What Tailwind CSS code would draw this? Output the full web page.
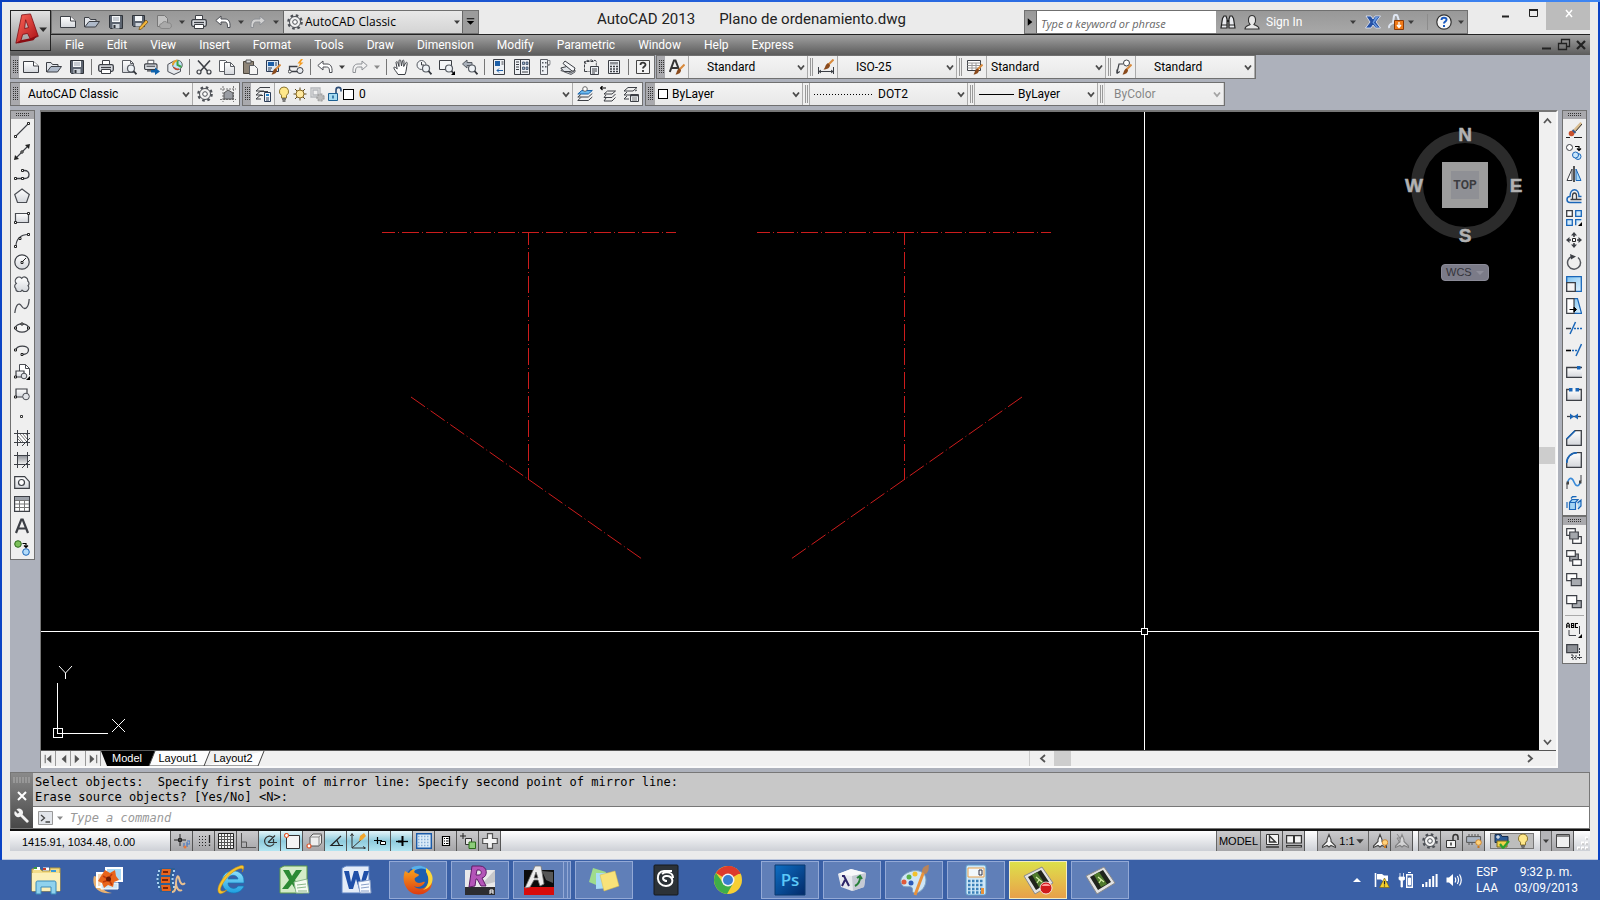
<!DOCTYPE html>
<html lang="en">
<head>
<meta charset="utf-8">
<title>AutoCAD 2013 - Plano de ordenamiento.dwg</title>
<script src="https://cdn.jsdelivr.net/npm/@tailwindcss/browser@4"></script>
</head>
<body class="h-screen flex flex-col overflow-hidden bg-[#0a42c4] font-['Open_Sans','Noto_Sans',sans-serif] text-[12px] text-black">

<!-- Icon sprite -->
<svg width="0" height="0" class="absolute" aria-hidden="true">
<defs>
<linearGradient id="gp" x1="0" y1="0" x2="0" y2="1"><stop offset="0" stop-color="#fff"/><stop offset="1" stop-color="#d4d7dc"/></linearGradient>
<linearGradient id="gd" x1="0" y1="0" x2="0" y2="1"><stop offset="0" stop-color="#8d9096"/><stop offset="1" stop-color="#f2f2f2"/></linearGradient>
<linearGradient id="gb" x1="0" y1="0" x2="1" y2="1"><stop offset="0" stop-color="#7fc4f0"/><stop offset="1" stop-color="#e4f5ff"/></linearGradient>
<linearGradient id="gr" x1="0" y1="0" x2="1" y2="1"><stop offset="0" stop-color="#ff6a5c"/><stop offset="1" stop-color="#a80e14"/></linearGradient>
<linearGradient id="gps" x1="0" y1="0" x2="1" y2="1"><stop offset="0" stop-color="#0e6fc4"/><stop offset="1" stop-color="#032a6a"/></linearGradient>
<linearGradient id="gie" x1="0" y1="0" x2="0" y2="1"><stop offset="0" stop-color="#8fe0fb"/><stop offset="1" stop-color="#1c9fe0"/></linearGradient>
<linearGradient id="gff" x1="0" y1="0" x2="0" y2="1"><stop offset="0" stop-color="#f9a21c"/><stop offset="1" stop-color="#dd3b12"/></linearGradient>
<g id="mag"><circle cx="10" cy="9.500" r="3.500" fill="#eef2f6" stroke="#555a62" stroke-width="1.200"/><path d="M12.500 12l3 3.300" stroke="#33363c" stroke-width="1.800"/></g>
<g id="brush"><path d="M15.500 5.500L10 11" stroke="#d88a3c" stroke-width="2"/><path d="M10.500 9.500l1.500 1.500c0 3-3 4.500-5.500 4.500 1.500-1.500 1-5 4-6z" fill="#8a4a1c"/></g>

<symbol id="new" viewBox="0 0 16 16"><path d="M.5 2.500h10l5 4.500v6.500H.5z" fill="url(#gp)" stroke="#3c3f45"/><path d="M10.500 2.500v4.500h5" fill="#fff" stroke="#3c3f45"/></symbol>
<symbol id="open" viewBox="0 0 16 16"><path d="M.5 13V3.500h4.500l1.500 2h5.500V8" fill="#e2e5ea" stroke="#3c3f45"/><path d="M.8 13L5 7.500h10.500L11.500 13z" fill="#aeb9c9" stroke="#3c3f45"/></symbol>
<symbol id="save" viewBox="0 0 16 16"><path d="M1.500 1.500h13v13h-12l-1-1z" fill="#5c6470" stroke="#2f3339"/><path d="M4 2h8v6H4z" fill="#f4f6f8"/><path d="M5 4h6M5 6h6" stroke="#9aa2ad"/><path d="M4.500 10h7v4.500h-7z" fill="#cdd3da"/><path d="M5.500 11h2v3h-2z" fill="#2f3339"/></symbol>
<symbol id="saveas" viewBox="0 0 16 16"><path d="M.5 1.500h12v11H1.500l-1-1z" fill="#5c6470" stroke="#2f3339"/><path d="M3 2h7v5H3z" fill="#f4f6f8"/><path d="M3.500 9h6v3.500h-6z" fill="#cdd3da"/><path d="M14 6l2 2-6.500 7-2.500 1 .6-2.800z" fill="#f2b53a" stroke="#6b4a16" stroke-width=".7"/></symbol>
<symbol id="cloud" viewBox="0 0 16 16"><path d="M1.500 1.500h7l3 3v8h-10z" fill="#c2c2c2" stroke="#777"/><path d="M6 14.500a2.500 2.500 0 010-5 3 3 0 015.500-.5 2.800 2.800 0 012 5.500z" fill="#a9a9a9" stroke="#808080" stroke-width=".8"/></symbol>
<symbol id="print" viewBox="0 0 16 16"><path d="M4.500 6V1.500h7V6" fill="#fff" stroke="#3c3f45"/><rect x=".7" y="5.700" width="14.600" height="6.600" rx="1.500" fill="#d9dce1" stroke="#3c3f45" stroke-width="1.300"/><path d="M3 8.500h10" stroke="#3c3f45" stroke-width="1.300"/><path d="M3.500 10.500h9v4h-9z" fill="#fff" stroke="#3c3f45"/></symbol>
<symbol id="preview" viewBox="0 0 16 16"><path d="M1.500 1.500h8l3 3v9h-11z" fill="url(#gp)" stroke="#5b5e64"/><path d="M9.500 1.500v3h3" fill="none" stroke="#5b5e64"/><use href="#mag"/></symbol>
<symbol id="publish" viewBox="0 0 16 16"><g transform="scale(.85)"><path d="M4.500 6V1.500h7V6" fill="#fff" stroke="#3c3f45"/><rect x=".7" y="5.700" width="14.600" height="6.600" rx="1.500" fill="#d9dce1" stroke="#3c3f45" stroke-width="1.300"/><path d="M3 8.500h10M3.500 14h6" stroke="#3c3f45" stroke-width="1.300"/></g><path d="M7 11h4V8.500l5 4-5 3.500v-2.500H7z" fill="#0f62ac"/></symbol>
<symbol id="print3d" viewBox="0 0 16 16"><path d="M.8 5.500L7 2l6.500 3.500v7L7 15.500.8 12.500z" fill="#e6e9ed" stroke="#4c5058"/><circle cx="10.500" cy="6" r="4.800" fill="#bfe3f4" stroke="#666"/><path d="M10.500 1.500V6l4 2" stroke="#3ca44a" stroke-width="2" fill="none"/><path d="M6 6a5 5 0 014-4.500" stroke="#e8a22c" stroke-width="2" fill="none"/><path d="M7 8.500a4.500 4.500 0 005 1.500" stroke="#c8452c" stroke-width="1.500" fill="none"/></symbol>
<symbol id="cut" viewBox="0 0 16 16"><path d="M2 1.500L11.500 12M14 1.500L4.500 12" stroke="#3c3f45" stroke-width="1.600"/><circle cx="3" cy="13" r="2" fill="none" stroke="#3c3f45" stroke-width="1.200"/><circle cx="13" cy="13" r="2" fill="none" stroke="#3c3f45" stroke-width="1.200"/></symbol>
<symbol id="copyclip" viewBox="0 0 16 16"><path d="M.5 1.500h6l3 3v8h-9z" fill="#fff" stroke="#5b5e64"/><path d="M5.500 3.500h6l4 4v8h-10z" fill="url(#gp)" stroke="#5b5e64"/><path d="M11.500 3.500v4h4" fill="none" stroke="#5b5e64"/></symbol>
<symbol id="paste" viewBox="0 0 16 16"><path d="M1.500 2.500h10v12h-10z" fill="#8e8477" stroke="#4c463d"/><path d="M4 1h5v3H4z" fill="#d8d8d8" stroke="#555"/><path d="M7.500 6.500h5l3 3v6h-8z" fill="#f4f4f4" stroke="#5b5e64"/></symbol>
<symbol id="match" viewBox="0 0 16 16"><path d="M1.500 1.500h12v11h-12z" fill="#dce8f5" stroke="#2b3b55"/><path d="M3 3h6v4H3z" fill="#1d5fa8"/><path d="M10 4h2M10 6h2M3 9h4M3 11h3" stroke="#2b3b55"/><use href="#brush"/></symbol>
<symbol id="block" viewBox="0 0 16 16"><path d="M1.500 12.500V7.500h8M1.500 12.500h8" fill="none" stroke="#3c3f45" stroke-width="1.300"/><circle cx="1.800" cy="12.500" r="1.500" fill="#fff" stroke="#3c3f45"/><circle cx="12" cy="11.500" r="3" fill="#e8ebef" stroke="#3c3f45"/><path d="M13 0L9.500 4.500h2.500L10 8.500 15.500 3.500H12.500L15 0z" fill="#f39a1e"/></symbol>
<symbol id="undo" viewBox="0 0 16 16"><path d="M.8 6.500L6 2v3h4c3.500 0 5.500 2.500 5 8.500h-2.500c0-4-.5-5.500-3-5.500H6v3z" fill="#fff" stroke="#4a4d53"/></symbol>
<symbol id="redo" viewBox="0 0 16 16"><path d="M15.200 6.500L10 2v3H6c-3.500 0-5.500 2.500-5 8.500h2.500c0-4 .5-5.500 3-5.500H10v3z" fill="#f3f3f3" fill-opacity=".6" stroke="#8d9095"/></symbol>
<symbol id="down" viewBox="0 0 8 8"><path d="M1 2.500h6L4 6z" fill="#3c3c3c"/></symbol>
<symbol id="downg" viewBox="0 0 8 8"><path d="M1 2.500h6L4 6z" fill="#8a8a8a"/></symbol>
<symbol id="chev" viewBox="0 0 8 8"><path d="M1 2.500l3 3.500 3-3.500" fill="none" stroke="#4a4a4a" stroke-width="1.800"/></symbol>
<symbol id="pan" viewBox="0 0 16 16"><path d="M5 15.500C3 12 1 10.500.8 8.500 2 7.500 3 9 4.200 10L3 3.500c.2-1.200 1.500-1 1.800 0L6 7.500 6 1.800C6.200.5 7.700.6 7.800 1.800L8.500 7l1-5.200C9.800.7 11 1 11 2.200L10.700 7.500l2-3.700c.7-1 1.700-.3 1.500.6C13.500 8 13.500 12 12 15.500z" fill="#fff" stroke="#3c3f45"/></symbol>
<symbol id="zoomrt" viewBox="0 0 16 16"><circle cx="5.500" cy="6" r="4.500" fill="#f3f5f7" stroke="#555a62"/><path d="M5.500 3v3H8" fill="none" stroke="#3c3f45"/><use href="#mag"/></symbol>
<symbol id="zoomwin" viewBox="0 0 16 16"><path d="M.5 1.500h12v9H.5z" fill="#f3f5f7" stroke="#3c3f45"/><use href="#mag"/><path d="M16 12v4h-4z" fill="#000"/></symbol>
<symbol id="zoomprev" viewBox="0 0 16 16"><path d="M.5 5L5 1v2.500h5v3H5V9z" fill="#a9b0ba" stroke="#555a62"/><use href="#mag"/></symbol>
<symbol id="props" viewBox="0 0 16 16"><path d="M2.500.5h11v15h-11z" fill="#eef1f5" stroke="#3c3f45"/><path d="M4 2h5v5H4z" fill="#1d5fa8"/><path d="M10.500 3h2M10.500 5h2" stroke="#3c3f45"/><path d="M6 11.500h6M8 9.500l-2 2 2 2" fill="none" stroke="#1d5fa8"/></symbol>
<symbol id="dc" viewBox="0 0 16 16"><path d="M.5.500h15v15H.5z" fill="#eef1f5" stroke="#3c3f45"/><path d="M6.500 1v14" stroke="#3c3f45"/><path d="M2 3h3M2 5.500h3M2 8h3M2 10.500h3" stroke="#3c3f45"/><path d="M8.500 3h2v2.500h-2zM12 3h2v2.500h-2zM8.500 8h2v2.500h-2zM12 8h2v2.500h-2z" fill="#9ab4d0" stroke="#2b3b55" stroke-width=".7"/><path d="M8 13h6" stroke="#3c3f45"/></symbol>
<symbol id="toolpal" viewBox="0 0 16 16"><path d="M3.500.5h7v15h-7z" fill="#eef1f5" stroke="#5c5f65"/><path d="M10.500 1.500h2.500v4h-2.500M10.500 6.500h2" fill="none" stroke="#8a8d92"/><path d="M5 3h1.500v1.500H5zM8 3h1.500v1.500H8zM5 7h1.500v1.500H5zM8 7h1.500v1.500H8zM5 11h1.500v1.500H5z" fill="#555a62"/></symbol>
<symbol id="sheet" viewBox="0 0 16 16"><path d="M.8 11.500L3 10l8 4 4-3v2l-4 2.500z" fill="#cfd3d8" stroke="#3c3f45" stroke-width=".8"/><path d="M.8 9l6-1.500 6 3.500-2 1.500H4z" fill="#dfe3e8" stroke="#3c3f45"/><path d="M3 4.500L5 2l10 7-1 3-2 0z" fill="#f4f5f7" stroke="#3c3f45"/></symbol>
<symbol id="markup" viewBox="0 0 16 16"><path d="M1.500 12.500v-10h9M3 5a2 2 0 013-3 2.500 2.500 0 014 0 2 2 0 013 3 2 2 0 010 2.500M1.500 12.500h5" fill="none" stroke="#3c3f45" stroke-dasharray="3 1"/><path d="M7.500 7.500h8v8h-8z" fill="#eef1f5" stroke="#3c3f45"/><path d="M9 10h5M9 12h5M9 14h3" stroke="#3c3f45"/></symbol>
<symbol id="calc" viewBox="0 0 16 16"><path d="M2.500 1.500h11v13h-11z" fill="#eef1f5" stroke="#3c3f45"/><path d="M4 3h8v2.500H4z" fill="#8d9096"/><path d="M4 7.500h2M7 7.500h2M10 7.500h2M4 10h2M7 10h2M10 10h2M4 12.500h2M7 12.500h2M10 12.500h2" stroke="#3c3f45" stroke-width="1.400"/></symbol>
<symbol id="help" viewBox="0 0 16 16"><path d="M1.500 1.500h13v13h-13z" fill="#f4f4f4" stroke="#444"/><path d="M5.500 6c0-3 5-3 5-.3C10.500 7.500 8 7.500 8 9.500M8 11v2" fill="none" stroke="#333" stroke-width="1.800"/></symbol>
<symbol id="textstyle" viewBox="0 0 16 16"><path d="M.8 13L5 1.500h1.500L10.500 12M2.500 9h6" fill="none" stroke="#333" stroke-width="2"/><use href="#brush"/></symbol>
<symbol id="dimstyle" viewBox="0 0 16 16"><path d="M.5 8v7M15.500 8v7M.5 12.500h15M3 11l-2 1.500L3 14M13 11l2 1.500-2 1.500" fill="none" stroke="#3c3f45"/><path d="M15.500.500L10 6" stroke="#d88a3c" stroke-width="2"/><path d="M10 4l2 2c0 3-3 4.500-6.500 4.500 2-1.500 1.500-5 4.500-6.500z" fill="#8a4a1c"/></symbol>
<symbol id="tablestyle" viewBox="0 0 16 16"><path d="M.5 1.500h13v10H.5z" fill="#fff" stroke="#3c3f45"/><path d="M.5 4h13M.5 6.500h13M.5 9h13M5 4v7M9 4v7" stroke="#999"/><use href="#brush"/></symbol>
<symbol id="mleader" viewBox="0 0 16 16"><path d="M.8 14.500L3 5h4M.8 14.500l.2-4M.8 14.500l3-2" fill="none" stroke="#3c3f45" stroke-width="1.200"/><circle cx="10.500" cy="4" r="3" fill="#fff" stroke="#3c3f45"/><use href="#brush"/></symbol>
<symbol id="gear" viewBox="0 0 16 16"><circle cx="8" cy="8" r="6.500" fill="none" stroke="#4d5056" stroke-width="2.600" stroke-dasharray="2.500 2.600"/><circle cx="8" cy="8" r="5.500" fill="#f2f2f2" stroke="#4d5056"/><circle cx="8" cy="8" r="2.300" fill="#fff" stroke="#4d5056"/></symbol>
<symbol id="wsframe" viewBox="0 0 16 16"><path d="M0 3h16M0 13.500h16M3 0v16M13.500 0v16" stroke="#777" stroke-dasharray="2 1"/><path d="M4 13V7l4-3 5 3v6z" fill="#9a9da3" stroke="#555"/></symbol>
<symbol id="layers" viewBox="0 0 16 16"><path d="M1 5l4-3.500h10M1 9l4-3.500h8M1 13l4-3.500h3M1 5h8M1 9h6M1 13h5" fill="none" stroke="#3c3f45"/><path d="M9.500 6.500h6v9h-6z" fill="#eef4fb" stroke="#2b3b55"/><path d="M11 8h3v2h-3z" fill="#1d7fc8"/><path d="M11 12h3M11 14h3" stroke="#2b3b55"/></symbol>
<symbol id="bulb" viewBox="0 0 16 16"><path d="M8 1a4.500 4.500 0 00-2.500 8.300V12h5V9.300A4.500 4.500 0 008 1z" fill="#ffe88a" stroke="#8a7430"/><path d="M6 13h4M6.500 15h3" stroke="#555" stroke-width="1.400"/></symbol>
<symbol id="sun" viewBox="0 0 16 16"><path d="M8 1.500v13M1.500 8h13M3 3l10 10M13 3L3 13" stroke="#5a4a20"/><circle cx="8" cy="8" r="4" fill="#ffe9a0" stroke="#8a6a20"/></symbol>
<symbol id="freeze" viewBox="0 0 16 16"><path d="M2 2h9v9H2zM4 4h5v5H4z" fill="none" stroke="#b4b6ba" stroke-width="1.300"/><circle cx="11.500" cy="11.500" r="3.300" fill="#bbb" stroke="#a5a5a5" stroke-width="2" stroke-dasharray="2 1"/></symbol>
<symbol id="lock" viewBox="0 0 16 16"><path d="M9 7V4c0-3.500 5-3.500 5 0v1.500" fill="none" stroke="#2b4b75" stroke-width="1.600"/><path d="M1.500 7.500h9v7h-9z" fill="#a6dcf2" stroke="#1c5f92"/><path d="M6 9.500v3" stroke="#1c5f92" stroke-width="1.500"/></symbol>
<symbol id="laymk" viewBox="0 0 16 16"><path d="M.8 8l4-3.500h10.500l-4 3.500z" fill="#6ab8ee" stroke="#1a62a8"/><path d="M.8 11l3-2.500M.8 11h10.500l4-3.500M.8 14.500l3-3M.8 14.500h10.500l4-3.500" fill="none" stroke="#3c3f45"/><circle cx="8" cy="3" r="2.300" fill="#fff" stroke="#666"/></symbol>
<symbol id="layprev" viewBox="0 0 16 16"><path d="M0 2h6M2.500 0L.5 2l2 2" fill="none" stroke="#000" stroke-width="1.200"/><path d="M4 8l3.500-3h8L12 8zM4 11.500L6 9M4 11.500h8L15.500 8M4 15l2-3M4 15h8l3.500-3.500" fill="none" stroke="#3c3f45"/></symbol>
<symbol id="laystate" viewBox="0 0 16 16"><path d="M1 5l4-3.500h9L10 5zM1 9l3-3M1 9h6M1 13l3-3M1 13h5M12 5l2-1" fill="none" stroke="#3c3f45"/><path d="M7.500 8.500h8v7h-8z" fill="#eef1f5" stroke="#3c3f45"/><path d="M8 9.500h7" stroke="#3c3f45" stroke-width="1.500"/><path d="M9 12h5M9 14h5" stroke="#777"/></symbol>

<symbol id="line" viewBox="0 0 16 16"><path d="M2 14L14 2" stroke="#3c3f45" stroke-width="1.100"/><path d="M.5 13.500h2v2h-2zM13.500.5h2v2h-2z" fill="#fff" stroke="#222"/></symbol>
<symbol id="xline" viewBox="0 0 16 16"><path d="M2 14L14 2" stroke="#3c3f45" stroke-width="1.100"/><path d="M0 16l1-5 4 4zM16 0l-5 1 4 4z" fill="#222"/><path d="M7 7h2v2H7z" fill="#fff" stroke="#222"/></symbol>
<symbol id="pline" viewBox="0 0 16 16"><path d="M2 12.500h8.500c6 0 6-8 0-8H8" fill="none" stroke="#3c3f45" stroke-width="1.300"/><path d="M.5 11.500h2v2h-2zM7.500 11.500h2v2h-2zM7.500 3.500h2v2h-2z" fill="#fff" stroke="#222"/></symbol>
<symbol id="polygon" viewBox="0 0 16 16"><path d="M8 1l7.300 5.500-2.800 8h-9L.7 6.500z" fill="url(#gp)" stroke="#4a4d53" stroke-width="1.200"/></symbol>
<symbol id="rect" viewBox="0 0 16 16"><path d="M1.500 3.500h13v9h-13z" fill="url(#gp)" stroke="#4a4d53" stroke-width="1.200"/><path d="M.5 11.500h2v2h-2zM13.500 2.500h2v2h-2z" fill="#fff" stroke="#222"/></symbol>
<symbol id="arc" viewBox="0 0 16 16"><path d="M2 14C2 7 7 2.500 14 2.500" fill="none" stroke="#3c3f45" stroke-width="1.200"/><path d="M.5 13.500h2v2h-2zM5 5.500h2v2H5zM13.500 1.500h2v2h-2z" fill="#fff" stroke="#222"/></symbol>
<symbol id="circle" viewBox="0 0 16 16"><circle cx="8" cy="8" r="7.200" fill="url(#gp)" stroke="#3c3f45" stroke-width="1.200"/><path d="M8 8l4-4" stroke="#222"/><path d="M7 7.500h2v2H7z" fill="#fff" stroke="#222"/></symbol>
<symbol id="revcloud" viewBox="0 0 16 16"><path d="M8 14.200a3.400 3.400 0 01-6.300-1.800 3 3 0 01.6-4.900A3.600 3.600 0 017.700 2.300a3.400 3.400 0 016 2.700 3 3 0 01.3 4.700A3.500 3.500 0 018 14.200z" fill="url(#gp)" stroke="#4a4d53" stroke-width="1.200"/></symbol>
<symbol id="spline" viewBox="0 0 16 16"><path d="M.8 15C2 6 5 4 7.500 8s7 4 7.700-7" fill="none" stroke="#4a4d53" stroke-width="1.300"/></symbol>
<symbol id="ellipse" viewBox="0 0 16 16"><ellipse cx="8" cy="8" rx="6.500" ry="4.200" fill="#f5f5f5" stroke="#3c3f45" stroke-width="1.200"/><path d="M.5 7h2v2h-2zM13.500 7h2v2h-2zM7 3h2v2H7z" fill="#fff" stroke="#222"/></symbol>
<symbol id="earc" viewBox="0 0 16 16"><path d="M2 8C2 3 14.500 2.500 14.500 8c0 2.500-2.500 4.500-6 4.500" fill="none" stroke="#3c3f45" stroke-width="1.300"/><path d="M.5 7h2v2h-2zM7 11.500h2v2H7z" fill="#fff" stroke="#222"/></symbol>
<symbol id="insert" viewBox="0 0 16 16"><path d="M5.500 7V.5h6l4 4V11" fill="#fff" stroke="#4a4d53"/><path d="M11.500.500v4h4" fill="none" stroke="#4a4d53"/><path d="M2 7h8v6H2z" fill="url(#gp)" stroke="#3c3f45" stroke-width="1.200"/><circle cx="10" cy="12" r="2.800" fill="#e2e4e8" stroke="#4a4d53"/><path d="M.5 12h2v2h-2z" fill="#fff" stroke="#222"/><path d="M16 12v4h-4z"/></symbol>
<symbol id="mkblock" viewBox="0 0 16 16"><path d="M2 3h11v8H2z" fill="url(#gp)" stroke="#3c3f45" stroke-width="1.200"/><circle cx="12" cy="10.500" r="3.300" fill="#e2e4e8" stroke="#4a4d53"/><path d="M.5 10h2v2h-2z" fill="#fff" stroke="#222"/></symbol>
<symbol id="point" viewBox="0 0 16 16"><path d="M6.500 7.500h2v2h-2z" fill="#fff" stroke="#333"/></symbol>
<symbol id="hatch" viewBox="0 0 16 16"><path d="M3.500 3.500h10v9h-10z" fill="#fff"/><path d="M4 6l5 6M4 9l3 3M6 4l6 7M9 4l4 5M12 4l1 1.500" stroke="#777"/><path d="M0 3.500h16M0 12.500h16M3.500 0v16M13.500 0v16M8 16l8-8" fill="none" stroke="#3c3f45"/></symbol>
<symbol id="gradient" viewBox="0 0 16 16"><path d="M3.500 3.500h10v9h-10z" fill="url(#gd)"/><path d="M0 3.500h16M0 12.500h16M3.500 0v16M13.500 0v16M8 16l8-8" fill="none" stroke="#3c3f45"/></symbol>
<symbol id="region" viewBox="0 0 16 16"><path d="M.7 2.700h10l4.600 5v6.600H.7z" fill="url(#gp)" stroke="#3c3f45" stroke-width="1.200"/><circle cx="7.500" cy="8.500" r="3" fill="#fff" stroke="#3c3f45" stroke-width="1.200"/></symbol>
<symbol id="table" viewBox="0 0 16 16"><path d="M.6.6h14.800v14.800H.6z" fill="#fff" stroke="#3c3f45" stroke-width="1.200"/><path d="M1 1h14v3H1z" fill="#9da2aa"/><path d="M1 4.500h14M1 8h14M1 11.500h14M5.500 4v11M10.500 4v11" stroke="#777"/></symbol>
<symbol id="mtext" viewBox="0 0 16 16"><path d="M2 15L7.300 1.500h1.400L14 15M4 10.500h8" fill="none" stroke="#3c3f45" stroke-width="2.200"/></symbol>
<symbol id="addsel" viewBox="0 0 16 16"><circle cx="4" cy="4" r="3.300" fill="#7cc05a" stroke="#2c6a1c"/><circle cx="12" cy="12" r="3.300" fill="#b4dcfa" stroke="#1a66b8"/><path d="M8.500 3.500h3.500v3M10 5.500l2 2 2-2" fill="none" stroke="#000" stroke-width="1.200"/></symbol>

<symbol id="erase" viewBox="0 0 16 16"><path d="M15.500 1L8 9" stroke="#d8bc90" stroke-width="3"/><path d="M16 2L9.500 9.500" stroke="#333"/><circle cx="5.500" cy="11.500" r="2.800" fill="#c8502c"/><path d="M6.500 8l3 3" stroke="#3a5a8a" stroke-width="1.800"/><path d="M0 15.500h4M8 15.500h8" stroke="#222"/></symbol>
<symbol id="copy" viewBox="0 0 16 16"><circle cx="3.500" cy="3.500" r="3" fill="#fff" stroke="#3c3f45"/><circle cx="12" cy="12.500" r="3" fill="#c8e6fb" stroke="#1a66b8"/><circle cx="9.500" cy="11" r="3" fill="#c8e6fb" stroke="#1a66b8"/><path d="M9 2.500h4v3M11 4.500l2 2 2-2" fill="none" stroke="#000" stroke-width="1.200"/></symbol>
<symbol id="mirror" viewBox="0 0 16 16"><path d="M6 3v11.500H1z" fill="#fff" stroke="#3c3f45"/><path d="M10 3v11.500h5z" fill="#a8d8f6" stroke="#1a66b8"/><path d="M8 0v16" stroke="#000" stroke-width="1.300"/></symbol>
<symbol id="offset" viewBox="0 0 16 16"><path d="M15.500 14.500H4c-4 0-4-6 0-6 0-9 9-9 9 0h2.500" fill="none" stroke="#1a66b8" stroke-width="1.500"/><path d="M15.500 11.500H4.500M6.500 11V8c0-4 4-4 4 0v3" fill="none" stroke="#3c3f45" stroke-width="1.300"/></symbol>
<symbol id="array" viewBox="0 0 16 16"><path d="M.7.7h5.600v5.600H.7z" fill="#fff" stroke="#3c3f45" stroke-width="1.300"/><path d="M9.700.7h5.600v5.600H9.700zM.7 9.700h5.600v5.600H.7zM9.700 15.300V9.700h5.600" fill="#cfe9fb" stroke="#1a66b8" stroke-width="1.300"/><path d="M16 12v4h-4z"/></symbol>
<symbol id="move" viewBox="0 0 16 16"><path d="M8 2v3M8 11v3M2 8h3M11 8h3" stroke="#3c3f45" stroke-width="1.600"/><path d="M8 0l3 3.500H5zM8 16l3-3.500H5zM0 8l3.500-3v6zM16 8l-3.500-3v6z" fill="#3c3f45"/><path d="M6.500 6.500h3v3h-3z" fill="#fff" stroke="#222"/></symbol>
<symbol id="rotate" viewBox="0 0 16 16"><path d="M6 2.500a6.500 6.500 0 106 1" fill="none" stroke="#55585e" stroke-width="1.500"/><path d="M4 0l6 2.500L5 5.500z" fill="#3c3f45"/></symbol>
<symbol id="scale" viewBox="0 0 16 16"><path d="M.7.700h14.600v14.600H.7z" fill="url(#gb)" stroke="#1a66b8" stroke-width="1.300"/><path d="M.7 6.700h8.600v8.600H.7z" fill="#f4f4f4" stroke="#3c3f45" stroke-width="1.300"/></symbol>
<symbol id="stretch" viewBox="0 0 16 16"><path d="M7 .7h4.500l4 14.600H7z" fill="url(#gb)" stroke="#1a66b8" stroke-width="1.200"/><path d="M.7.7H8v14.600H.7z" fill="#fff" stroke="#3c3f45" stroke-width="1.200"/><path d="M3.500 11.500h5M8 9l2.500 2.500L8 14z" stroke="#000" fill="#000"/></symbol>
<symbol id="trim" viewBox="0 0 16 16"><path d="M0 8.500h5" stroke="#3c3f45" stroke-width="1.500"/><path d="M4 14L9.500 2" stroke="#1a66b8" stroke-width="1.500"/><path d="M8 8.500h8" stroke="#1a66b8" stroke-width="1.500" stroke-dasharray="2 1"/></symbol>
<symbol id="extend" viewBox="0 0 16 16"><path d="M0 8.500h5" stroke="#000" stroke-width="1.600"/><path d="M10 14L15.500 2" stroke="#1a66b8" stroke-width="1.500"/><path d="M6 8.500h6" stroke="#1a66b8" stroke-width="1.500" stroke-dasharray="2 1"/></symbol>
<symbol id="breakpt" viewBox="0 0 16 16"><path d="M16 3.500H.7v9.800H16" fill="url(#gp)" stroke="#3c3f45" stroke-width="1.300"/><path d="M11 2h3.500v3.500H11z" fill="#1a66b8"/></symbol>
<symbol id="break" viewBox="0 0 16 16"><path d="M4 3.500H.7v10.800h14.600V3.500H12" fill="url(#gp)" stroke="#3c3f45" stroke-width="1.300"/><path d="M3 2h3.500v3.500H3zM9.500 2H13v3.500H9.500z" fill="#1a66b8"/></symbol>
<symbol id="join" viewBox="0 0 16 16"><path d="M1 8.500h14" stroke="#3c3f45" stroke-width="1.300"/><path d="M4 5.500L8 8.500 4 11.500zM12 5.500L8 8.500l4 3z" fill="#1a66b8"/></symbol>
<symbol id="chamfer" viewBox="0 0 16 16"><path d="M9 .7h6.300v14.600H.7V9z" fill="url(#gp)" stroke="#3c3f45" stroke-width="1.300"/><path d="M.7 9L9 .7" stroke="#1a66b8" stroke-width="1.600"/></symbol>
<symbol id="fillet" viewBox="0 0 16 16"><path d="M11 .7h4.300v14.600H.7V11C.7 5 5 .7 11 .7z" fill="url(#gp)" stroke="#3c3f45" stroke-width="1.300"/><path d="M.7 11C.7 5 5 .7 11 .7" fill="none" stroke="#1a66b8" stroke-width="1.600"/></symbol>
<symbol id="blend" viewBox="0 0 16 16"><path d="M1.500 9C3 3 6 3 8 8s5 5 6.500-.5" fill="none" stroke="#3a8ad8" stroke-width="1.600"/><path d="M1 15V9M15 7V1" stroke="#3c3f45"/><path d="M.5 7.500h2.500v3H.5zM13 6.500h2.500v3H13z" fill="#444"/></symbol>
<symbol id="explode" viewBox="0 0 16 16"><path d="M3.500 6.500h6v7h-6zM3.500 6.500L6 3.500h6l-2.500 3M5 2.500L6.500.7h4M11.500 7l3.500-3v6l-3 3M1 6v6" fill="#a4d4f4" stroke="#1a66b8" stroke-width="1.200"/></symbol>
<symbol id="ord1" viewBox="0 0 16 16"><path d="M.7.700h8.600v6.600H.7zM6.700 8.700h8.600v6.600H6.700z" fill="#fff" stroke="#3c3f45" stroke-width="1.200"/><path d="M3.700 4h8.600v7H3.700z" fill="#a4a7ac" stroke="#3c3f45" stroke-width="1.200"/></symbol>
<symbol id="ord2" viewBox="0 0 16 16"><path d="M3.700 4h8.600v7H3.700z" fill="#9a9da3" stroke="#3c3f45" stroke-width="1.200"/><path d="M.7.700h8.600v5.600H.7zM6.700 9.700h8.600v5.600H6.700z" fill="#fff" stroke="#3c3f45" stroke-width="1.200"/></symbol>
<symbol id="ord3" viewBox="0 0 16 16"><path d="M.7 1.700h10v7H.7z" fill="#fff" stroke="#3c3f45" stroke-width="1.200"/><path d="M5.300 6.700h10v7h-10z" fill="#a8abb0" stroke="#3c3f45" stroke-width="1.200"/></symbol>
<symbol id="ord4" viewBox="0 0 16 16"><path d="M6.300 6.700h9v7h-9z" fill="#a8abb0" stroke="#3c3f45" stroke-width="1.200"/><path d="M.7 1.700h10v8H.7z" fill="#fff" stroke="#3c3f45" stroke-width="1.200"/></symbol>
<symbol id="ordtext" viewBox="0 0 16 16"><path d="M.7 6V2.500L2 1l1.300 1.500V6M.7 4h2.500M5.500 1.500v4h2.200V1.500zM5.500 3.500h2M12 1.500h-2.500v4H12" fill="none" stroke="#000" stroke-width="1.100"/><path d="M3 8v5.500h7M13.500 4v8" fill="none" stroke="#3c3f45"/><path d="M16 12v4h-4z"/></symbol>
<symbol id="ordhatch" viewBox="0 0 16 16"><path d="M.7.700h11v8H.7z" fill="#8d9096" stroke="#3c3f45" stroke-width="1.200"/><path d="M5 13.500h11M13.500 4v12M7 16v-6M10 16v-5M5 11h3" stroke="#3c3f45" stroke-dasharray="2 1"/></symbol>

<symbol id="st1" viewBox="0 0 16 16"><path d="M0 7h12M6 1v12" stroke="#222"/><path d="M4.500 5.500h3v3h-3z" fill="none" stroke="#222"/><path d="M13 9v5M10 10v4M13 8h3v3h-3" fill="none" stroke="#4a7ac0" stroke-width="1.200"/><circle cx="11" cy="14" r="1.500" fill="#e87a3c"/></symbol>
<symbol id="st2" viewBox="0 0 16 16"><path d="M3 3.500h9M3 6.500h9M3 9.500h9M3 12.500h9" stroke="#222" stroke-dasharray="1 2"/><path d="M13.500 2v8M13.500 11.500V13" stroke="#222" stroke-width="1.300"/></symbol>
<symbol id="st3" viewBox="0 0 16 16"><path d="M.5.500h15v15H.5z" fill="#f4f4f4" stroke="#222"/><path d="M1 3.500h14M1 6.500h14M1 9.500h14M1 12.500h14M3.500 1v14M6.500 1v14M9.500 1v14M12.500 1v14" stroke="#555"/></symbol>
<symbol id="st4" viewBox="0 0 16 16"><path d="M1.500 0v14.500H16M1.500 9h5v5" fill="none" stroke="#555"/></symbol>
<symbol id="st5" viewBox="0 0 16 16"><path d="M11 4.500a5 5 0 101 6M6 9.500L13 2.500M6 9.500h9M11.500 6v4" fill="none" stroke="#333" stroke-width="1.200"/></symbol>
<symbol id="st6" viewBox="0 0 16 16"><path d="M2.500 2.500h13v13h-13z" fill="#f4f4f4" stroke="#333"/><circle cx="2.500" cy="2.500" r="2" fill="#fff" stroke="#e0582c" stroke-width="1.200"/></symbol>
<symbol id="st7" viewBox="0 0 16 16"><path d="M4 4l3-3h8.500v9L13 13H4z" fill="#eee" stroke="#555"/><path d="M4 4h9v9M13 4l2.500-3" fill="none" stroke="#888"/><circle cx="3" cy="13" r="2" fill="#fff" stroke="#e0582c" stroke-width="1.200"/></symbol>
<symbol id="st8" viewBox="0 0 16 16"><path d="M13 3L3 12.500h12M9 7.500l2.500 5" fill="none" stroke="#222" stroke-width="1.200"/></symbol>
<symbol id="st9" viewBox="0 0 16 16"><path d="M2 15V1M2 15h13M2 15L12 6M.5 3L2 .5 3.500 3M13 13.500l2.500 1.500-2.500 1.500" fill="none" stroke="#333"/><path d="M10 3l4-3 2 3-4 4-3 1z" fill="#f2a62c"/></symbol>
<symbol id="st10" viewBox="0 0 16 16"><path d="M2 7.500h8M5.500 4v7" stroke="#000" stroke-width="1.200"/><path d="M8.500 8.500h5v3h-5z" fill="#fff" stroke="#000"/></symbol>
<symbol id="st11" viewBox="0 0 16 16"><path d="M2 8.500h12" stroke="#000" stroke-width="1.300"/><path d="M8.500 3v10M8.500 8.500H4" stroke="#000" stroke-width="2"/></symbol>
<symbol id="st12" viewBox="0 0 16 16"><path d="M.7.700h14.600v14.600H.7z" fill="#dcecf8" stroke="#1a5aa8" stroke-width="1.400"/><path d="M2 3.500h12M2 6.500h12M2 9.500h12M2 12.500h12" stroke="#8ab0d8" stroke-width="1.500" stroke-dasharray="1.500 1.500"/></symbol>
<symbol id="st13" viewBox="0 0 16 16"><path d="M4.500 3.500h7v9h-7z" fill="#fff" stroke="#000" stroke-width="1.200"/><path d="M6 5.500h1M8 5.500h2.500M6 8h1M8 8h2.500M6 10.500h1M8 10.500h2.500" stroke="#000" stroke-width="1.200"/></symbol>
<symbol id="st14" viewBox="0 0 16 16"><path d="M0 3h6M3 0v6" stroke="#222"/><path d="M5.500 5.500h6v6h-6z" fill="#e8e8e8" stroke="#333"/><path d="M9 9h6.500v6.500H9z" fill="#8ccc7a" stroke="#2c6a1c"/></symbol>
<symbol id="st15" viewBox="0 0 16 16"><path d="M5.500.7h5v4.800h4.800v5h-4.800v4.800h-5v-4.800H.7v-5h4.800z" fill="#f4f4f4" stroke="#555" stroke-width="1.200"/></symbol>
<symbol id="sr1" viewBox="0 0 16 16"><path d="M2.500 1.500h12v10h-12z" fill="#f4f4f4" stroke="#333"/><path d="M5.500 3v6h6zM2 14h13" fill="none" stroke="#333" stroke-width="1.400"/></symbol>
<symbol id="sr2" viewBox="0 0 16 16"><path d="M.6 2.600h7v7.400h-7zM8.400 2.600h7v7.400h-7zM.6 12.500h14.800v1.500H.6z" fill="#f4f4f4" stroke="#333" stroke-width="1.200"/></symbol>
<symbol id="anno" viewBox="0 0 16 16"><path d="M8 1.500l-2 5v2L1.500 13v1.500L6 12.500l2 1.500 2-1.500 4.500 2V13L10 8.500v-2z" fill="#f8f8f8" stroke="#444" stroke-width="1.100"/></symbol>
<symbol id="annob" viewBox="0 0 16 16"><use href="#anno"/><circle cx="13" cy="9.500" r="2.800" fill="#ffd27a" stroke="#c87820" stroke-width=".8"/><path d="M12 13h2v2h-2z" fill="#c87820"/></symbol>
<symbol id="annog" viewBox="0 0 16 16"><g opacity=".45"><use href="#anno"/><path d="M3 1l3 4H3l3 5" fill="none" stroke="#444"/></g></symbol>
<symbol id="lockw" viewBox="0 0 16 16"><path d="M9 7V4c0-3.500 5-3.500 5 0v3" fill="none" stroke="#333" stroke-width="1.500"/><path d="M2.500 7.500h9v7h-9z" fill="#f4f4f4" stroke="#333"/><path d="M7 9.500v3" stroke="#333" stroke-width="1.500"/></symbol>
<symbol id="hw" viewBox="0 0 16 16"><path d="M.6 3.600h14v5.800H.6z" fill="#aab4c2" stroke="#555"/><path d="M3 1v2M6 1v2M9 1v2M12 1v2M3 10v2M6 10v2" stroke="#555"/><circle cx="12.500" cy="9.500" r="2.800" fill="#ffd27a" stroke="#c87820" stroke-width=".8"/><path d="M11.500 13h2v2h-2z" fill="#c87820"/></symbol>
<symbol id="tray1" viewBox="0 0 16 16"><path d="M1 1.500h6l1 2h6v6H1z" fill="#2c5a94" stroke="#1a3050"/><path d="M3 8h10v6H3z" fill="#f2d24a" stroke="#7a6a20"/><path d="M6 11l3 4 6-7" fill="none" stroke="#2ea02e" stroke-width="2.200"/><path d="M2 4h4M4 2v4" stroke="#fff"/></symbol>
<symbol id="clean" viewBox="0 0 16 16"><path d="M1.500 1.500h13v13h-13z" fill="#f0f0f0" stroke="#444"/><path d="M2 3h12" stroke="#888" stroke-width="2"/></symbol>
<symbol id="wrench" viewBox="0 0 16 16"><path d="M2.500 1.500l2.800 2.800-1.500 1.500L1 3a4 4 0 005.500 5.500l6 6a1.500 1.500 0 002-2l-6-6A4 4 0 002.500 1.500z" fill="#f2f2f2"/></symbol>

<symbol id="binoc" viewBox="0 0 16 16"><path d="M1 14l1.500-9.500L4 2h2l1 3v9zM15 14l-1.500-9.500L12 2h-2L9 5v9z" fill="#e8eaee" stroke="#222" stroke-width="1.200"/><path d="M7 7h2" stroke="#222" stroke-width="2"/><path d="M1 11h6M9 11h6" stroke="#222"/></symbol>
<symbol id="person" viewBox="0 0 16 16"><path d="M1 15c0-3 3-3 5-4.500C3.500 8 3.800 1.500 8 1.500s4.500 6.500 2 9c2 1.500 5 1.500 5 4.500z" fill="#e8e8e8" stroke="#333" stroke-width="1.100"/></symbol>
<symbol id="exch" viewBox="0 0 16 16"><path d="M1 2h5l2 3 2-3h5.500L11 8l4.500 6h-5L8 11l-2 3H.5L5 8z" fill="#2450a4" stroke="#e8eefa" stroke-width=".8"/><path d="M10.500 3h3L9 8.500l4 4.500h-2L7.500 8.500z" fill="#6a9ae0"/></symbol>
<symbol id="a360" viewBox="0 0 16 16"><path d="M1.500 14c-1.500-2 1-4 3.500-5L6 2c.5-1.500 3-1.500 3.500 0l1.500 5" fill="none" stroke="#dfe6f2" stroke-width="2"/><path d="M6.500 6.500h9v9h-9z" fill="#f07a18" stroke="#8a3a08"/><path d="M11 8v5M9 11l2 2.500 2-2.500" fill="none" stroke="#fff" stroke-width="1.300"/></symbol>
<symbol id="helpc" viewBox="0 0 16 16"><circle cx="8" cy="8" r="7.200" fill="#f8f8f8" stroke="#333" stroke-width="1.200"/><path d="M5.500 6c0-3.200 5-3 5-.3C10.500 7.500 8 7.500 8 9.500M8 11v2" fill="none" stroke="#1a5ac0" stroke-width="2"/></symbol>

<symbol id="t-explorer" viewBox="0 0 32 32"><path d="M2 5h8l2 2h8V4h10v23H2z" fill="#f2dc8a" stroke="#b89a3a"/><path d="M2 9h28v18H2z" fill="#fbefb8"/><path d="M4 3h6v3H4zM13 3.500h6v3h-6z" fill="#fff"/><path d="M4 4h3" stroke="#3a9a3a" stroke-width="2"/><path d="M13 5h3" stroke="#c83a2a" stroke-width="2"/><path d="M21 7h5" stroke="#3a9ad8" stroke-width="2"/><path d="M6 30V19c0-2 1-2 2-2h16c1 0 2 0 2 2v11h-5v-7H11v7z" fill="#8fd2ee" stroke="#3a8ab8"/></symbol>
<symbol id="t-photo" viewBox="0 0 32 32"><path d="M2 12c-3 10 4 19 18 17-8-1-13-6-11-15z" fill="#e8b070"/><path d="M5 9h12v14H5z" fill="#f6d8b8" stroke="#fff" stroke-width="2"/><path d="M14 4h16v13H14z" fill="#a8d8f4" stroke="#fff" stroke-width="2"/><path d="M9 19h17v6H9z" fill="#cfe6f6" stroke="#fff"/><path d="M9 12l4-6 5 3 5-3 1 6 3 4-5 2-1 5-5-2-4 3-2-5-4-2z" fill="#e8641c"/><path d="M11 12l5 3 4-5M11 18l6-2 3 5" stroke="#c03a0c" stroke-width="1.500" fill="none"/><circle cx="16.500" cy="15" r="2.500" fill="#6a1c06"/></symbol>
<symbol id="t-movie" viewBox="0 0 32 32"><path d="M6 4h15c-3 8-3 16 0 24H6C2 20 2 12 6 4z" fill="#2d5f96"/><path d="M4 7h2M3 11h2M2.500 15h2M3 19h2M4 23h2M19 7h2M18 11h2M17.500 15h2M18 19h2M19 23h2" stroke="#a8d0f0" stroke-width="2"/><path d="M8 5h9l-1 6H7zM7 13h9v6H7zM7 21h9l1 6H8z" fill="#e8641c"/><path d="M9 8h5M8 16h6M9 24h5" stroke="#7a2408" stroke-width="2"/><path d="M31 19c-3 3-5 0-6-5-1-4-3 0-3 5 0 6-1 9-4 9M22 19c0 5 3 9 6 7" fill="none" stroke="#e8c090" stroke-width="2"/></symbol>
<symbol id="t-ie" viewBox="0 0 32 32"><path d="M28 19H12c0 6 8 7 10 3h6c-4 11-22 9-22-5C6 4 28 3 28 17zM12 15h10c-1-5-9-5-10 0z" fill="url(#gie)" stroke="#1478b8" stroke-width=".7"/><path d="M26 8c4-7 1-8-5-5C11 7 1 20 2 27c1 5 6 2 9-1-9 4-8-2-1-11C17 6 28 1 27 7z" fill="#f6c32c" stroke="#c08a10" stroke-width=".5"/></symbol>
<symbol id="t-excel" viewBox="0 0 32 32"><path d="M2 4l4-2h23v24l-4 3H2z" fill="#d4ecc8" stroke="#5a9a4a"/><path d="M5 6h6l3 6 4-6h6l-7 10 6 9h-6l-3-5-4 5H4l7-9z" fill="#2c8a34"/><path d="M16 18l13-3 2 14H18z" fill="#f4faf0" stroke="#8ab88a"/><path d="M19 21l9-1M19 24l9-1M20 27h9" stroke="#8ab88a"/></symbol>
<symbol id="t-word" viewBox="0 0 32 32"><path d="M2 4l4-2h23v24l-4 3H2z" fill="#e4ecf8" stroke="#5a80c0"/><path d="M4 7h5l2 11 3-11h4l3 11 3-11h5l-6 18h-4l-3-10-3 10H9z" fill="#1f4fa8"/><path d="M18 18l12-2 1 13H20z" fill="#f8faff" stroke="#8aa0c8"/><path d="M21 21l8-1M21 24l8-1M21 27h8" stroke="#8aa0c8"/></symbol>
<symbol id="t-firefox" viewBox="0 0 32 32"><circle cx="17" cy="15" r="13" fill="#1d5fb0"/><path d="M9 4c6-4 16-3 19 5-5-6-12-5-16-2z" fill="#58b0ea"/><path d="M3 7c2 1 3 2 4 2C9 6 11 5 13 5c-1 2-1 3 0 4 2 1 4 1 4 2s-3 2-4 3 0 5 4 5c3 0 4-2 6-1-2 5-8 6-11 4 3 4 12 4 14-3 1-4 0-8-2-11 7 4 8 14 2 19-7 6-18 4-22-4C1 18 1 12 3 7z" fill="url(#gff)"/><path d="M24 8c4 6 3 14-3 18 8-2 12-10 8-17-1-2-3-4-5-5z" fill="#fbd63a"/></symbol>
<symbol id="t-revit" viewBox="0 0 32 32"><path d="M1 6h30v25H1z" fill="#e9e9ea"/><path d="M31 6v12L16 22z" fill="#c6c7ca"/><path d="M1 23h30v8H1z" fill="#2c2d30"/><path d="M8 2h8c8 0 8 11 2 12l4 8h-5l-4-7h-1l-1 7-6 1zM13 6l-1 5h3c3 0 3-5 0-5z" fill="#b455b8" stroke="#5c1c66"/><path d="M26 30v-4h3v4M26 28h3" fill="none" stroke="#fff"/></symbol>
<symbol id="t-acad" viewBox="0 0 32 32"><path d="M1 6h30v25H1z" fill="#0c0c0c"/><path d="M19 7l11 1v11l-7-3z" fill="#777" opacity=".7"/><path d="M1 23h30v8H1z" fill="#d80c0c"/><path d="M12 2h6l3 18-4 2-2-6h-4l-4 7-5 1zM13 8l-2 6h4z" fill="#ececec" stroke="#777" stroke-width=".8"/></symbol>
<symbol id="t-sticky" viewBox="0 0 32 32"><path d="M5 4l13 4-5 15L1 18z" fill="#9fdc8c"/><path d="M8 9l14 0v15L8 25z" fill="#a8dcf6"/><path d="M12 11l15-4 4 15-15 5z" fill="#f8e27a" stroke="#d8bc4a" stroke-width=".5"/></symbol>
<symbol id="t-3ds" viewBox="0 0 32 32"><rect x="4" y="1" width="24" height="30" rx="1" fill="#2c3238" stroke="#15181c"/><path d="M22 7H14c-9 0-8 15 2 15 9 0 8-11 0-10-5 1-3 5 1 5M12 10c4-3 11-2 11 4" fill="none" stroke="#fff" stroke-width="2"/></symbol>
<symbol id="t-chrome" viewBox="0 0 32 32"><circle cx="16" cy="16" r="14" fill="#f6cf34"/><path d="M16 16L3.900 9A14 14 0 0128.100 9z" fill="#dd3a2c"/><path d="M16 2a14 14 0 0112.600 8H16z" fill="#dd3a2c"/><path d="M3.900 9A14 14 0 0015 30l6-10.500-9 .5z" fill="#3fae49"/><circle cx="16" cy="16" r="6.500" fill="#f2f2f2"/><circle cx="16" cy="16" r="5" fill="#3a7ed0"/></symbol>
<symbol id="t-ps" viewBox="0 0 32 32"><path d="M1 1h30v30H1z" fill="url(#gps)" stroke="#0a3a70"/></symbol>
<symbol id="t-cube" viewBox="0 0 32 32"><path d="M2 10l13-5 15 4-2 14-12 4L5 23z" fill="#e6e8ee"/><path d="M2 10l14 2 14-3-15-4z" fill="#f8f8fa"/><path d="M16 12l14-3-2 14-11 4z" fill="#c6cad4"/><path d="M6 12h2l5 10M9 16l-3 6" fill="none" stroke="#2c2468" stroke-width="2"/><path d="M19 22c4-2 5-5 5-9M21 14l3-2 2 3" fill="none" stroke="#28803a" stroke-width="2"/></symbol>
<symbol id="t-paint" viewBox="0 0 32 32"><path d="M14 7c9-2 14 3 14 9 0 9-8 14-12 13-3-1 0-5-3-6s-7 1-9-2C0 15 6 9 14 7z" fill="#cfe6f6" stroke="#7aa0c0"/><circle cx="11" cy="13" r="2.500" fill="#58b04a"/><circle cx="17" cy="10" r="2.500" fill="#f2c22c"/><circle cx="6" cy="18" r="2.500" fill="#e05a3a"/><circle cx="13" cy="19" r="2.500" fill="#2c5ab8"/><path d="M17 31L26 7" stroke="#e8923a" stroke-width="3"/><path d="M24 8c0-5 4-7 7-7-1 3 1 5-3 9z" fill="#b8845a"/></symbol>
<symbol id="t-calc" viewBox="0 0 32 32"><rect x="6" y="1" width="20" height="30" rx="2" fill="#cfe8f8" stroke="#5a9ac8"/><path d="M8 4h16v9H8z" fill="#f2f8fc" stroke="#e8a04a"/><path d="M19 6h3v5h-3z" fill="none" stroke="#334"/><path d="M8 17h16M8 21h16M8 25h16M8 28.500h16" stroke="#3a80b8" stroke-width="2.500" stroke-dasharray="2.500 1.500"/><path d="M21 24h3v6h-3z" fill="#e8923a"/></symbol>
<symbol id="t-cam" viewBox="0 0 32 32"><path d="M2 12L20 3l11 16-18 11z" fill="#e2e2e2" stroke="#8a8a8a"/><path d="M6 13l13-7 8 12-13 8z" fill="#20241c"/><path d="M10 11l5-3 8 12-6 3z" fill="#4f7a2c"/><path d="M14 13l6 5M17 16l-2 3" stroke="#d8f0a8" stroke-width="1.200"/></symbol>
<symbol id="t-rec" viewBox="0 0 32 32"><use href="#t-cam"/><circle cx="24" cy="24" r="6" fill="#d01c1c" stroke="#fff" stroke-width=".8"/><path d="M19.500 22a5 4 0 019 0z" fill="#ff9a9a"/></symbol>
<symbol id="y-flag" viewBox="0 0 16 16"><path d="M1.500 1v14" stroke="#fff" stroke-width="1.600"/><path d="M3 2h5l2 1.500h4V9h-5L7 7.500H3z" fill="#fff"/><path d="M10.500 6l5 9.500h-10z" fill="#f8d22c" stroke="#6a5a10" stroke-width=".6"/><path d="M10.500 9v3.500M10.500 13.500v1" stroke="#222" stroke-width="1.200"/></symbol>
<symbol id="y-bat" viewBox="0 0 16 16"><path d="M8.700 2.700h5.600v12.600H8.700z" fill="none" stroke="#fff" stroke-width="1.400"/><path d="M10 .5h3M10.500 6h2v7h-2z" stroke="#fff" stroke-width="1" fill="#fff"/><path d="M2 1v4M5.500 1v4M1 5h5.500v2.500l-2 1V15H3V8.500l-2-1z" stroke="#fff" fill="#fff" stroke-width=".8"/></symbol>
<symbol id="y-sig" viewBox="0 0 16 16"><path d="M0 12h2v3H0zM3.400 10h2v5h-2zM6.800 7h2v8h-2zM10.200 4h2v11h-2zM13.600 2h2v13h-2z" fill="#fff"/></symbol>
<symbol id="y-vol" viewBox="0 0 16 16"><path d="M.5 5.500H3L7 2v12l-4-3.500H.5z" fill="#fff"/><path d="M9 5.500q1.500 2.500 0 5M11.300 4q2.500 4 0 8M13.500 2.500q3.500 5.500 0 11" fill="none" stroke="#fff" stroke-width="1.200"/></symbol>
</defs>
</svg>

<!-- Application window -->
<div class="flex-1 min-h-0 flex flex-col px-[2px]">
  <div class="h-[2px] shrink-0 -mx-[2px] bg-linear-to-r from-[#0a3fbe] via-[#2563dd] to-[#3f86f2]"></div>
  <div class="flex-1 min-h-0 flex flex-col bg-[#ebebeb] px-2 pb-2 border-b border-[#bcc6dc]">

    <header class="relative shrink-0">
      <button aria-label="Application menu" class="absolute z-10 left-0 top-2 size-[41px] border border-[#222] bg-linear-to-b from-[#e2e2e2] via-[#b9b9b9] to-[#8c8c8c]">
        <svg viewBox="0 0 40 40" class="size-full"><path d="M5 33L11 4l9-1 8 23-8 3-3-6-5 1-2 7zM14 18l4-1-3-8z" fill="url(#gr)" stroke="#7a0a10" stroke-width=".8"/><path d="M5 33l5-3 10-2 7-3-4 5-15 3z" fill="#8a0c12"/><path d="M29 17h8l-4 4.500z" fill="#2d2d2d"/></svg>
      </button>
      <div class="h-8 flex items-end">
        <div class="ml-[41px] h-6 w-[428px] flex items-center border border-[#707070] bg-linear-to-b from-[#989898] to-[#a8a8a8]">
          <div class="flex-1 flex items-center pl-1" data-strip="new:New open:Open save:Save saveas:Save_As cloud:Cloud .down print:Plot undo:Undo .down redo:Redo .down"></div>
          <label class="relative w-[180px] h-full border-x border-[#666] bg-linear-to-b from-[#e8e8e8] to-[#d4d4d4] flex items-center pl-[3px]">
            <svg class="size-4 shrink-0"><use href="#gear"/></svg>
            <select aria-label="Workspace switcher" class="appearance-none w-full h-full pl-[2px] bg-transparent text-[12px]"><option>AutoCAD Classic</option></select>
            <svg class="absolute right-[1px] top-[7px] size-2 pointer-events-none"><use href="#down"/></svg>
          </label>
          <button aria-label="Customize Quick Access Toolbar" class="w-[15px] h-full bg-[#9c9c9c]"><svg viewBox="0 0 16 22" class="size-full"><path d="M4 7.500h8" stroke="#000"/><path d="M4 10h8l-4 4z"/></svg></button>
        </div>
        <h1 class="flex-1 h-full flex items-center justify-center gap-6 pt-[2px] font-['Roboto',sans-serif] text-[15px] text-[#222] whitespace-nowrap"><span>AutoCAD 2013</span><span>Plano de ordenamiento.dwg</span></h1>
        <div class="h-6 w-[444px] flex items-center border border-[#707070] bg-linear-to-b from-[#989898] to-[#a8a8a8]">
          <button aria-label="Collapse search" class="w-3 h-full border-r border-[#666]"><svg viewBox="0 0 12 22" class="size-full"><path d="M3 7l5 4-5 4z"/></svg></button>
          <input aria-label="Search" placeholder="Type a keyword or phrase" class="w-[179px] h-full bg-white px-1 pt-[2px] text-[11px] italic placeholder:text-[#666]">
          <button aria-label="Search help" class="w-6 flex justify-center"><svg class="size-4"><use href="#binoc"/></svg></button>
          <button class="flex items-center gap-[6px] pl-1 font-['Roboto',sans-serif] text-[12px] text-white"><svg class="size-4"><use href="#person"/></svg>Sign In</button>
          <button aria-label="Sign in options" class="ml-auto w-4 flex justify-center"><svg class="size-2"><use href="#down"/></svg></button>
          <button aria-label="Autodesk Exchange" class="w-6 flex justify-center"><svg class="size-4"><use href="#exch"/></svg></button>
          <button aria-label="Autodesk 360" class="w-[22px] flex justify-center"><svg class="size-4"><use href="#a360"/></svg></button>
          <button aria-label="More" class="w-2"><svg class="size-2"><use href="#down"/></svg></button>
          <button aria-label="Help" class="ml-3 pl-1 w-7 flex justify-center border-l border-[#8c8c8c]"><svg class="size-4"><use href="#helpc"/></svg></button>
          <button aria-label="Help options" class="w-3 flex justify-center"><svg class="size-2"><use href="#down"/></svg></button>
        </div>
        <div class="h-full w-[122px] flex items-start justify-end">
          <button aria-label="Minimize" class="w-7 h-7"><svg viewBox="0 0 28 28" class="size-full"><path d="M12 14.500h7" stroke="#222" stroke-width="2"/></svg></button>
          <button aria-label="Maximize" class="w-7 h-7"><svg viewBox="0 0 28 28" class="size-full"><path d="M11.500 7.500h8v7h-8z" fill="none" stroke="#222"/><path d="M11 8h9" stroke="#222" stroke-width="2"/></svg></button>
          <button aria-label="Close" class="w-11 h-7 bg-[#bcbcbc]"><svg viewBox="0 0 44 28" class="size-full"><path d="M20 8l6 7M26 8l-6 7" stroke="#fff" stroke-width="1.500"/></svg></button>
        </div>
      </div>
      <nav class="h-[21px] flex items-center pl-[43px] border-t border-[#222] bg-linear-to-b from-[#a2a2a2] to-[#5c5c5c] font-['Roboto',sans-serif] text-white" data-menu="File Edit View Insert Format Tools Draw Dimension Modify Parametric Window Help Express">
        <div class="order-last ml-auto flex items-center pr-px">
          <button aria-label="Minimize drawing" class="size-4"><svg viewBox="0 0 16 16"><path d="M3 11.500h9" stroke="#222" stroke-width="2"/></svg></button>
          <button aria-label="Restore drawing" class="size-4 mx-px"><svg viewBox="0 0 16 16"><path d="M5.500 6V2.500h8v7H11M2.500 6.500h8v6h-8z" fill="none" stroke="#222" stroke-width="1.300"/></svg></button>
          <button aria-label="Close drawing" class="size-4"><svg viewBox="0 0 16 16"><path d="M4 4l8 8M12 4l-8 8" stroke="#222" stroke-width="2.200"/></svg></button>
        </div>
      </nav>
    </header>

    <!-- Docked toolbars -->
    <div class="shrink-0 flex flex-col gap-[3px] bg-[#adb1bb] pb-1">
      <div class="flex gap-px">
        <div class="h-6 flex border border-[#707070] bg-[#efefef]" role="toolbar" aria-label="Standard">
          <i data-grip="v"></i>
          <div class="flex items-center" data-tools="new:New open:Open save:Save | print:Plot preview:Preview publish:Publish print3d:3D_Print | cut:Cut copyclip:Copy paste:Paste match:Match_Properties block:Block_Editor | undo:Undo .down redo:Redo .downg | pan:Pan zoomrt:Zoom_Realtime zoomwin:Zoom_Window zoomprev:Zoom_Previous | props:Properties dc:DesignCenter toolpal:Tool_Palettes sheet:Sheet_Set markup:Markup calc:QuickCalc | help:Help"></div>
        </div>
        <div class="h-6 flex border border-[#707070] bg-[#efefef]" role="toolbar" aria-label="Styles">
          <i data-grip="v"></i>
          <div class="flex items-center" data-tools="textstyle:Text_Style"></div>
          <label data-select="Standard" data-name="Text style" data-indent="18" class="w-[120px]"></label><i data-sep></i>
          <div class="flex items-center" data-tools="dimstyle:Dimension_Style"></div>
          <label data-select="ISO-25" data-name="Dimension style" data-indent="18" class="w-[120px]"></label><i data-sep></i>
          <div class="flex items-center" data-tools="tablestyle:Table_Style"></div>
          <label data-select="Standard" data-name="Table style" data-indent="4" class="w-[120px]"></label><i data-sep></i>
          <div class="flex items-center" data-tools="mleader:Multileader_Style"></div>
          <label data-select="Standard" data-name="Multileader style" data-indent="18" class="w-[120px]"></label>
        </div>
      </div>
      <div class="flex gap-[2px]">
        <div class="h-6 flex border border-[#707070] bg-[#efefef]" role="toolbar" aria-label="Workspaces">
          <i data-grip="v"></i>
          <label data-select="AutoCAD Classic" data-name="Workspace" data-indent="8" class="w-[174px]"></label>
          <div class="flex items-center" data-tools="gear:Workspace_Settings wsframe:My_Workspace"></div>
        </div>
        <div class="h-6 flex border border-[#707070] bg-[#efefef]" role="toolbar" aria-label="Layers">
          <i data-grip="v"></i>
          <div class="flex items-center" data-tools="layers:Layer_Properties"></div>
          <label data-select="0" data-name="Layer" data-indent="84" class="w-[299px]"><span class="absolute left-px top-[3px] flex items-center pointer-events-none"><svg class="size-4"><use href="#bulb"/></svg><svg class="size-4"><use href="#sun"/></svg><svg class="size-4 ml-px"><use href="#freeze"/></svg><svg class="size-4 ml-[2px]"><use href="#lock"/></svg><b class="size-[11px] border border-black bg-white"></b></span></label>
          <div class="flex items-center" data-tools="laymk:Make_Layer_Current layprev:Layer_Previous laystate:Layer_States"></div>
        </div>
        <div class="h-6 flex border border-[#707070] bg-[#efefef]" role="toolbar" aria-label="Properties">
          <i data-grip="v"></i>
          <label data-select="ByLayer" data-name="Color" data-indent="17" class="w-[149px]"><b class="absolute left-[3px] top-[6px] size-[10px] border border-black bg-white pointer-events-none"></b></label><i data-sep></i>
          <label data-select="DOT2" data-name="Linetype" data-indent="68" class="w-[159px]"><svg class="absolute left-1 top-[11px] w-[59px] h-px pointer-events-none"><path d="M0 .5h59" stroke="#000" stroke-dasharray="1 2"/></svg></label><i data-sep></i>
          <label data-select="ByLayer" data-name="Lineweight" data-indent="43" class="w-[124px]"><b class="absolute left-1 top-[11px] w-[35px] border-t border-black pointer-events-none"></b></label><i data-sep></i>
          <label data-select="ByColor" data-name="Plot style" data-indent="9" data-off class="w-[120px] opacity-45"></label>
        </div>
      </div>
    </div>

    <!-- Drawing area with side toolbars -->
    <main class="flex-1 min-h-0 flex bg-[#adb1bb] pb-1 pr-[3px]">
      <div class="self-start w-[25px] flex flex-col border border-[#707070] bg-[#efefef]" role="toolbar" aria-label="Draw">
        <i data-grip="h"></i>
        <div class="flex flex-col" data-vtools="line xline pline polygon rect arc circle revcloud spline ellipse earc insert mkblock point hatch gradient region table mtext addsel"></div>
      </div>

      <section class="ml-[5px] mr-1 flex-1 min-w-0 flex flex-col border-t-2 border-l border-[#777] border-r-2 border-r-[#fafafa] bg-[#f0f0f0]">
        <div class="flex-1 min-h-0 flex">
          <div class="relative flex-1 min-w-0 overflow-hidden bg-black">
            <svg class="absolute inset-0 size-full" shape-rendering="crispEdges">
              <g fill="none" stroke="#cc1c1c" stroke-dasharray="17 3 1 3">
                <path d="M341 120.500H635" stroke-dashoffset="4"/><path d="M487.500 120V368" stroke-dashoffset="4"/>
                <path d="M716 120.500H1010" stroke-dashoffset="4"/><path d="M863.500 120V368" stroke-dashoffset="4"/>
              </g>
              <g fill="none" stroke="#cc1c1c" stroke-dasharray="17 3 1 3" shape-rendering="auto">
                <path d="M370 285L601 447"/><path d="M981 285L750 447"/>
              </g>
              <g stroke="#fff" fill="none">
                <path d="M0 519.500H1100M1107 519.500H1498M1103.500 0V516M1103.500 523V640M1100.500 516.500h6v6h-6z"/>
                <path d="M16.500 571V621.500H67M12.500 616.500h9v9h-9z"/>
                <path d="M18 554l6.500 7M31 554l-6.500 7v6M71 607l13 13M84 607l-13 13" shape-rendering="auto"/>
              </g>
            </svg>
            <!-- View cube -->
            <div class="absolute right-[10px] top-3 size-[128px]">
              <svg viewBox="0 0 128 128" class="size-full font-['Liberation_Sans',sans-serif] font-bold">
                <circle cx="64" cy="61" r="48" fill="none" stroke="#2b2b2b" stroke-width="12"/>
                <path d="M41 38h46v46H41z" fill="#9d9d9d"/><path d="M50 47h28v28H50z" fill="#8f9095"/>
                <g fill="#b2b2b2" stroke="#b2b2b2" stroke-width=".5" font-size="19" text-anchor="middle"><text x="64" y="17">N</text><text x="64" y="118">S</text><text x="13" y="68">W</text><text x="115" y="68">E</text></g>
                <text x="64" y="65" font-size="12" text-anchor="middle" fill="#3c3c40" class="font-['Roboto',sans-serif]">TOP</text>
              </svg>
            </div>
            <button class="absolute right-[50px] top-[152px] w-12 h-[17px] rounded-[4px] border border-[#8b8b98] bg-[#7b7b88] flex items-center justify-between px-1 font-['Liberation_Sans',sans-serif] text-[11px] text-[#33333a]">WCS<svg viewBox="0 0 8 8" class="size-2"><path d="M0 2h8L4 6z" fill="#8e8e9a"/></svg></button>
          </div>
          <div class="w-[17px] flex flex-col items-center justify-between bg-[#f0f0f0]">
            <button aria-label="Scroll up" class="size-[17px]"><svg viewBox="0 0 17 17"><path d="M5 11l3.500-4 3.500 4" fill="none" stroke="#555" stroke-width="1.800"/></svg></button>
            <div class="w-full flex-1 flex flex-col"><span class="h-[318px]"></span><span class="h-[17px] w-4 bg-[#cdcdcd]"></span></div>
            <button aria-label="Scroll down" class="size-[17px]"><svg viewBox="0 0 17 17"><path d="M5 7l3.500 4L12 7" fill="none" stroke="#555" stroke-width="1.800"/></svg></button>
          </div>
        </div>
        <div class="h-[18px] shrink-0 flex border-t border-[#555] border-b-2 border-b-[#fafafa] font-['Liberation_Sans',sans-serif] text-[11px]">
          <div class="flex">
            <button aria-label="First tab" class="w-[15px] border-r border-[#999]"><svg viewBox="0 0 15 15"><path d="M4.500 3v9" stroke="#555"/><path d="M11 3v9L6 7.500z" fill="#555"/></svg></button>
            <button aria-label="Previous tab" class="w-[15px] border-r border-[#999]"><svg viewBox="0 0 15 15"><path d="M11 3v9L6 7.500z" fill="#555"/></svg></button>
            <button aria-label="Next tab" class="w-[15px] border-r border-[#999]"><svg viewBox="0 0 15 15"><path d="M4 3v9l5-4.500z" fill="#555"/></svg></button>
            <button aria-label="Last tab" class="w-[15px] border-r border-[#999]"><svg viewBox="0 0 15 15"><path d="M4 3v9l5-4.500z" fill="#555"/><path d="M11.500 3v9" stroke="#555"/></svg></button>
          </div>
          <div class="relative flex items-center">
            <svg class="absolute inset-0 w-[170px] h-[15px]" viewBox="0 0 170 15"><path d="M0 0h54l-6 15H6z"/><path d="M54 0l-6 15H103L109 0M103 15h54L163 0" fill="#fdfdfd" stroke="#444"/></svg>
            <button class="relative w-[52px] text-white text-center">Model</button>
            <button class="relative w-[50px] text-center">Layout1</button>
            <button class="relative w-[60px] text-center">Layout2</button>
          </div>
          <div class="ml-auto w-[527px] flex items-center">
            <button aria-label="Scroll left" class="w-[25px] h-full border-l border-[#ccc]"><svg viewBox="0 0 24 15" class="size-full"><path d="M15 4l-4 3.500 4 3.500" fill="none" stroke="#555" stroke-width="1.800"/></svg></button>
            <span class="w-[17px] h-full bg-[#cdcdcd]"></span>
            <button aria-label="Scroll right" class="ml-auto mr-3 w-6 h-full"><svg viewBox="0 0 24 15" class="size-full"><path d="M8 4l4 3.500-4 3.500" fill="none" stroke="#555" stroke-width="1.800"/></svg></button>
          </div>
        </div>
      </section>

      <div class="self-start w-[25px] flex flex-col">
        <div class="flex flex-col border border-[#707070] bg-[#efefef]" role="toolbar" aria-label="Modify">
          <i data-grip="h"></i>
          <div class="flex flex-col" data-vtools="erase copy mirror offset array move rotate scale stretch trim extend breakpt break join chamfer fillet blend explode"></div>
        </div>
        <div class="flex flex-col border border-[#707070] bg-[#efefef]" role="toolbar" aria-label="Draw Order">
          <i data-grip="h"></i>
          <div class="flex flex-col" data-vtools="ord1 ord2 ord3 ord4"></div>
          <hr class="mx-[2px] mt-[2px] mb-[3px] border-[#aaa]">
          <div class="flex flex-col" data-vtools="ordtext ordhatch"></div>
        </div>
      </div>
    </main>

    <!-- Command line -->
    <section aria-label="Command line" class="shrink-0 h-[57px] flex border border-[#777] font-['DejaVu_Sans_Mono',monospace]">
      <div class="w-[22px] flex flex-col items-center justify-between py-1 bg-linear-to-b from-[#8a8a8a] to-[#484848]">
        <svg viewBox="0 0 18 6" class="w-[18px] h-[6px]"><path d="M0 1h18M0 3h18M0 5h18" stroke="#b0b0b0" stroke-dasharray="2 1"/></svg>
        <button aria-label="Close command line"><svg viewBox="0 0 12 12" class="size-3"><path d="M2 2l8 8M10 2l-8 8" stroke="#fff" stroke-width="2"/></svg></button>
        <button aria-label="Customize"><svg class="size-4"><use href="#wrench"/></svg></button>
      </div>
      <div class="flex-1 flex flex-col bg-white">
        <div class="h-[34px] pt-[2px] pl-[2px] border-b border-[#777] bg-[#c8c8c8] leading-[15px] whitespace-pre">Select objects:  Specify first point of mirror line: Specify second point of mirror line:
Erase source objects? [Yes/No] &lt;N&gt;:</div>
        <div class="flex-1 flex items-center pl-[5px]">
          <button aria-label="Recent commands" class="flex items-center gap-[3px]"><svg viewBox="0 0 15 14" class="w-[15px] h-[14px]"><path d="M.5.500h14v13H.5z" fill="#e2e5ea" stroke="#999"/><path d="M3 4l3.500 3L3 10M7.500 11H12" fill="none" stroke="#444" stroke-width="1.300"/></svg><svg class="size-2"><use href="#downg"/></svg></button>
          <input aria-label="Command" placeholder="Type a command" class="flex-1 pl-[6px] italic placeholder:text-[#999]">
        </div>
      </div>
    </section>

    <!-- Status bar -->
    <footer class="shrink-0 h-[22px] flex border-t-2 border-[#111] bg-linear-to-b from-white to-[#cdd0d6] font-['Liberation_Sans',sans-serif]">
      <output class="w-[160px] pl-3 pt-[2px] flex items-center text-[11px]">1415.91, 1034.48, 0.00</output>
      <div class="flex border-l border-[#555]" data-status="st1 st2 st3 st4 +st5 +st6 st7 +st8 +st9 +st10 +st11 st12 st13 st14 st15"></div>
      <div class="ml-auto flex">
        <div class="flex border-l border-[#666]"><button class="w-11 border-r border-[#666] bg-linear-to-b from-[#cbcbcd] to-[#a5a5a8] text-[11px]">MODEL</button></div>
        <div class="flex" data-status="sr1 sr2"></div>
        <div class="ml-3 flex border-l border-[#666]"><button class="w-[51px] border-r border-[#666] bg-linear-to-b from-[#cbcbcd] to-[#a5a5a8] flex items-center justify-center text-[11px]"><svg class="size-4"><use href="#anno"/></svg><span class="pl-[2px]">1:1</span><svg class="size-[10px]"><use href="#down"/></svg></button></div>
        <div class="flex" data-status="annob annog"></div>
        <div class="ml-[5px] flex border-l border-[#666]" data-status="gear lockw hw"></div>
        <div class="my-[2px] ml-[5px] w-11 flex items-center justify-around border border-[#777] bg-[#bdbdbd]"><svg class="size-4"><use href="#tray1"/></svg><svg class="size-4"><use href="#bulb"/></svg></div>
        <button aria-label="Status bar menu" class="ml-[6px] w-3 border-x border-[#666] bg-[#b5b5b8] flex items-center justify-center"><svg class="size-2"><use href="#down"/></svg></button>
        <div class="flex" data-status="clean"></div>
        <svg viewBox="0 0 16 20" class="w-4 h-5"><path d="M11 7h3M7 12h7M3 17h11" stroke="#fff" stroke-width="3" stroke-dasharray="3 1"/><path d="M12 8h2M8 13h6M4 18h10" stroke="#aaa" stroke-width="1" stroke-dasharray="2 2"/></svg>
      </div>
    </footer>
  </div>
</div>

<!-- Taskbar -->
<div class="shrink-0 h-10 flex items-stretch gap-1 bg-[#3a60a6] text-white">
  <div class="flex pl-[15px] -mr-[2px]" data-task="t-explorer:Explorer t-photo:Photo_Gallery t-movie:Movie_Maker t-ie:Internet_Explorer t-excel:Excel t-word:Word"></div>
  <div class="flex gap-1" data-run="t-firefox:Firefox t-revit:Revit"></div>
  <button aria-label="AutoCAD" class="my-px w-[58px] flex"><span class="w-[51px] h-full border border-[#93a9d6] bg-[#607fb8] flex items-center justify-center"><svg class="size-8"><use href="#t-acad"/></svg></span><span class="w-[4px] h-full border-y border-r border-[#93a9d6] bg-[#607fb8]"></span><span class="w-[3px] h-full border-y border-r border-[#93a9d6] bg-[#607fb8]"></span></button>
  <div class="flex" data-run="t-sticky:Sticky_Notes"></div>
  <div class="flex -mx-[2px]" data-task="t-3ds:3ds_Max t-chrome:Chrome"></div>
  <button aria-label="Photoshop" class="relative my-px w-[58px] border border-[#93a9d6] bg-[#607fb8] flex items-center justify-center"><svg class="size-8"><use href="#t-ps"/></svg><span class="absolute inset-0 flex items-center justify-center text-[17px] font-semibold text-[#5cc8f8]">Ps</span></button>
  <div class="flex gap-1" data-run="t-cube:Lambda t-paint:Paint t-calc:Calculator"></div>
  <button aria-label="Camtasia recording" class="my-px w-[58px] border border-[#f4ecc0] bg-linear-to-b from-[#dbe04a] to-[#e8a04a] flex items-center justify-center"><svg class="size-8"><use href="#t-rec"/></svg></button>
  <div class="flex" data-run="t-cam:Camtasia"></div>
  <div class="ml-auto flex items-center gap-2 pr-[22px] font-['Roboto',sans-serif]">
    <button aria-label="Show hidden icons" class="w-3 mr-[3px]"><svg viewBox="0 0 12 12"><path d="M2 8h8L6 4z" fill="#fff"/></svg></button>
    <svg class="size-4"><use href="#y-flag"/></svg><svg class="size-4"><use href="#y-bat"/></svg><svg class="size-4"><use href="#y-sig"/></svg><svg class="size-4"><use href="#y-vol"/></svg>
    <div class="ml-[6px] mr-2 flex flex-col items-center leading-4"><span>ESP</span><span>LAA</span></div>
    <div class="flex flex-col items-center leading-4"><span>9:32 p. m.</span><span>03/09/2013</span></div>
  </div>
</div>

<script>
const all = (s, f) => document.querySelectorAll(s).forEach(f);
const parse = s => s.split(' ').map(t => { const [id, name] = t.split(':'); return [id, (name || id).replace(/_/g, ' ')]; });
const icon = (id, cls) => `<svg class="${cls}"><use href="#${id}"/></svg>`;

all('[data-menu]', el => el.insertAdjacentHTML('afterbegin',
  el.dataset.menu.split(' ').map(t => `<button class="pl-3 pr-[11px]">${t}</button>`).join('')));

all('[data-grip]', el => { el.outerHTML = el.dataset.grip === 'v'
  ? '<span class="w-2 bg-[#a9a9ad] flex items-center justify-center"><svg viewBox="0 0 6 14" class="w-[6px] h-[14px]"><path d="M1.500 0v14M3.500 0v14M5.500 0v14" stroke="#333" stroke-dasharray="1 1"/></svg></span>'
  : '<span class="h-2 bg-[#a9a9ad] flex items-center justify-center"><svg viewBox="0 0 14 6" class="w-[14px] h-[6px]"><path d="M0 1.500h14M0 3.500h14" stroke="#333" stroke-dasharray="1 1"/></svg></span>'; });

all('[data-sep]', el => { el.outerHTML = '<span class="w-[6px] flex justify-center py-[2px]"><span class="w-[3px] border-x border-[#999]"></span></span>'; });

all('[data-strip]', el => el.innerHTML = parse(el.dataset.strip).map(([id, n]) =>
  id[0] === '.' ? `<button aria-label="More" class="w-[11px] flex justify-center">${icon(id.slice(1), 'size-2')}</button>`
  : `<button aria-label="${n}" class="w-6 flex justify-center">${icon(id, 'size-4')}</button>`).join(''));

all('[data-tools]', el => el.innerHTML = parse(el.dataset.tools).map(([id, n]) =>
  id === '|' ? '<span class="w-[6px] h-4 flex justify-center"><span class="w-px bg-[#777]"></span></span>'
  : id[0] === '.' ? `<button aria-label="More" class="w-3 flex justify-center">${icon(id.slice(1), 'size-2')}</button>`
  : `<button aria-label="${n}" class="w-[23px] flex justify-center">${icon(id, 'size-4')}</button>`).join(''));

all('[data-vtools]', el => el.innerHTML = parse(el.dataset.vtools).map(([id, n]) =>
  `<button aria-label="${n}" class="h-[22px] pr-px flex items-center justify-center">${icon(id, 'size-4')}</button>`).join(''));

all('[data-select]', el => {
  const d = el.dataset;
  el.classList.add('relative', 'border-x', 'border-[#aaa]');
  el.insertAdjacentHTML('afterbegin', `<select aria-label="${d.name}" ${'off' in d ? 'disabled' : ''} class="appearance-none block w-full h-full font-['Roboto',sans-serif] text-[12px] bg-linear-to-b from-[#f4f4f4] to-[#e8e8e8]" style="padding-left:${+d.indent || 0}px"><option>${d.select}</option></select>`);
  el.insertAdjacentHTML('beforeend', icon('chev', 'absolute right-[2px] top-[7px] size-2 pointer-events-none'));
});

all('[data-status]', el => el.innerHTML = parse(el.dataset.status).map(([id]) =>
  id[0] === '+'
  ? `<button aria-label="${id.slice(1)}" aria-pressed="true" class="w-[22px] border-r border-[#555] bg-linear-to-b from-[#e4f6fa] via-[#8fcbdc] to-[#b4e6f2] flex items-center justify-center">${icon(id.slice(1), 'size-4')}</button>`
  : `<button aria-label="${id}" class="w-[22px] border-r border-[#555] bg-linear-to-b from-[#cbcbcd] to-[#a5a5a8] flex items-center justify-center">${icon(id, 'size-4')}</button>`).join(''));

all('[data-task]', el => el.innerHTML = parse(el.dataset.task).map(([id, n]) =>
  `<button aria-label="${n}" class="w-[62px] flex items-center justify-center">${icon(id, 'size-8')}</button>`).join(''));
all('[data-run]', el => el.innerHTML = parse(el.dataset.run).map(([id, n]) =>
  `<button aria-label="${n}" class="my-px w-[58px] border border-[#93a9d6] bg-[#607fb8] flex items-center justify-center">${icon(id, 'size-8')}</button>`).join(''));
</script>
</body>
</html>
